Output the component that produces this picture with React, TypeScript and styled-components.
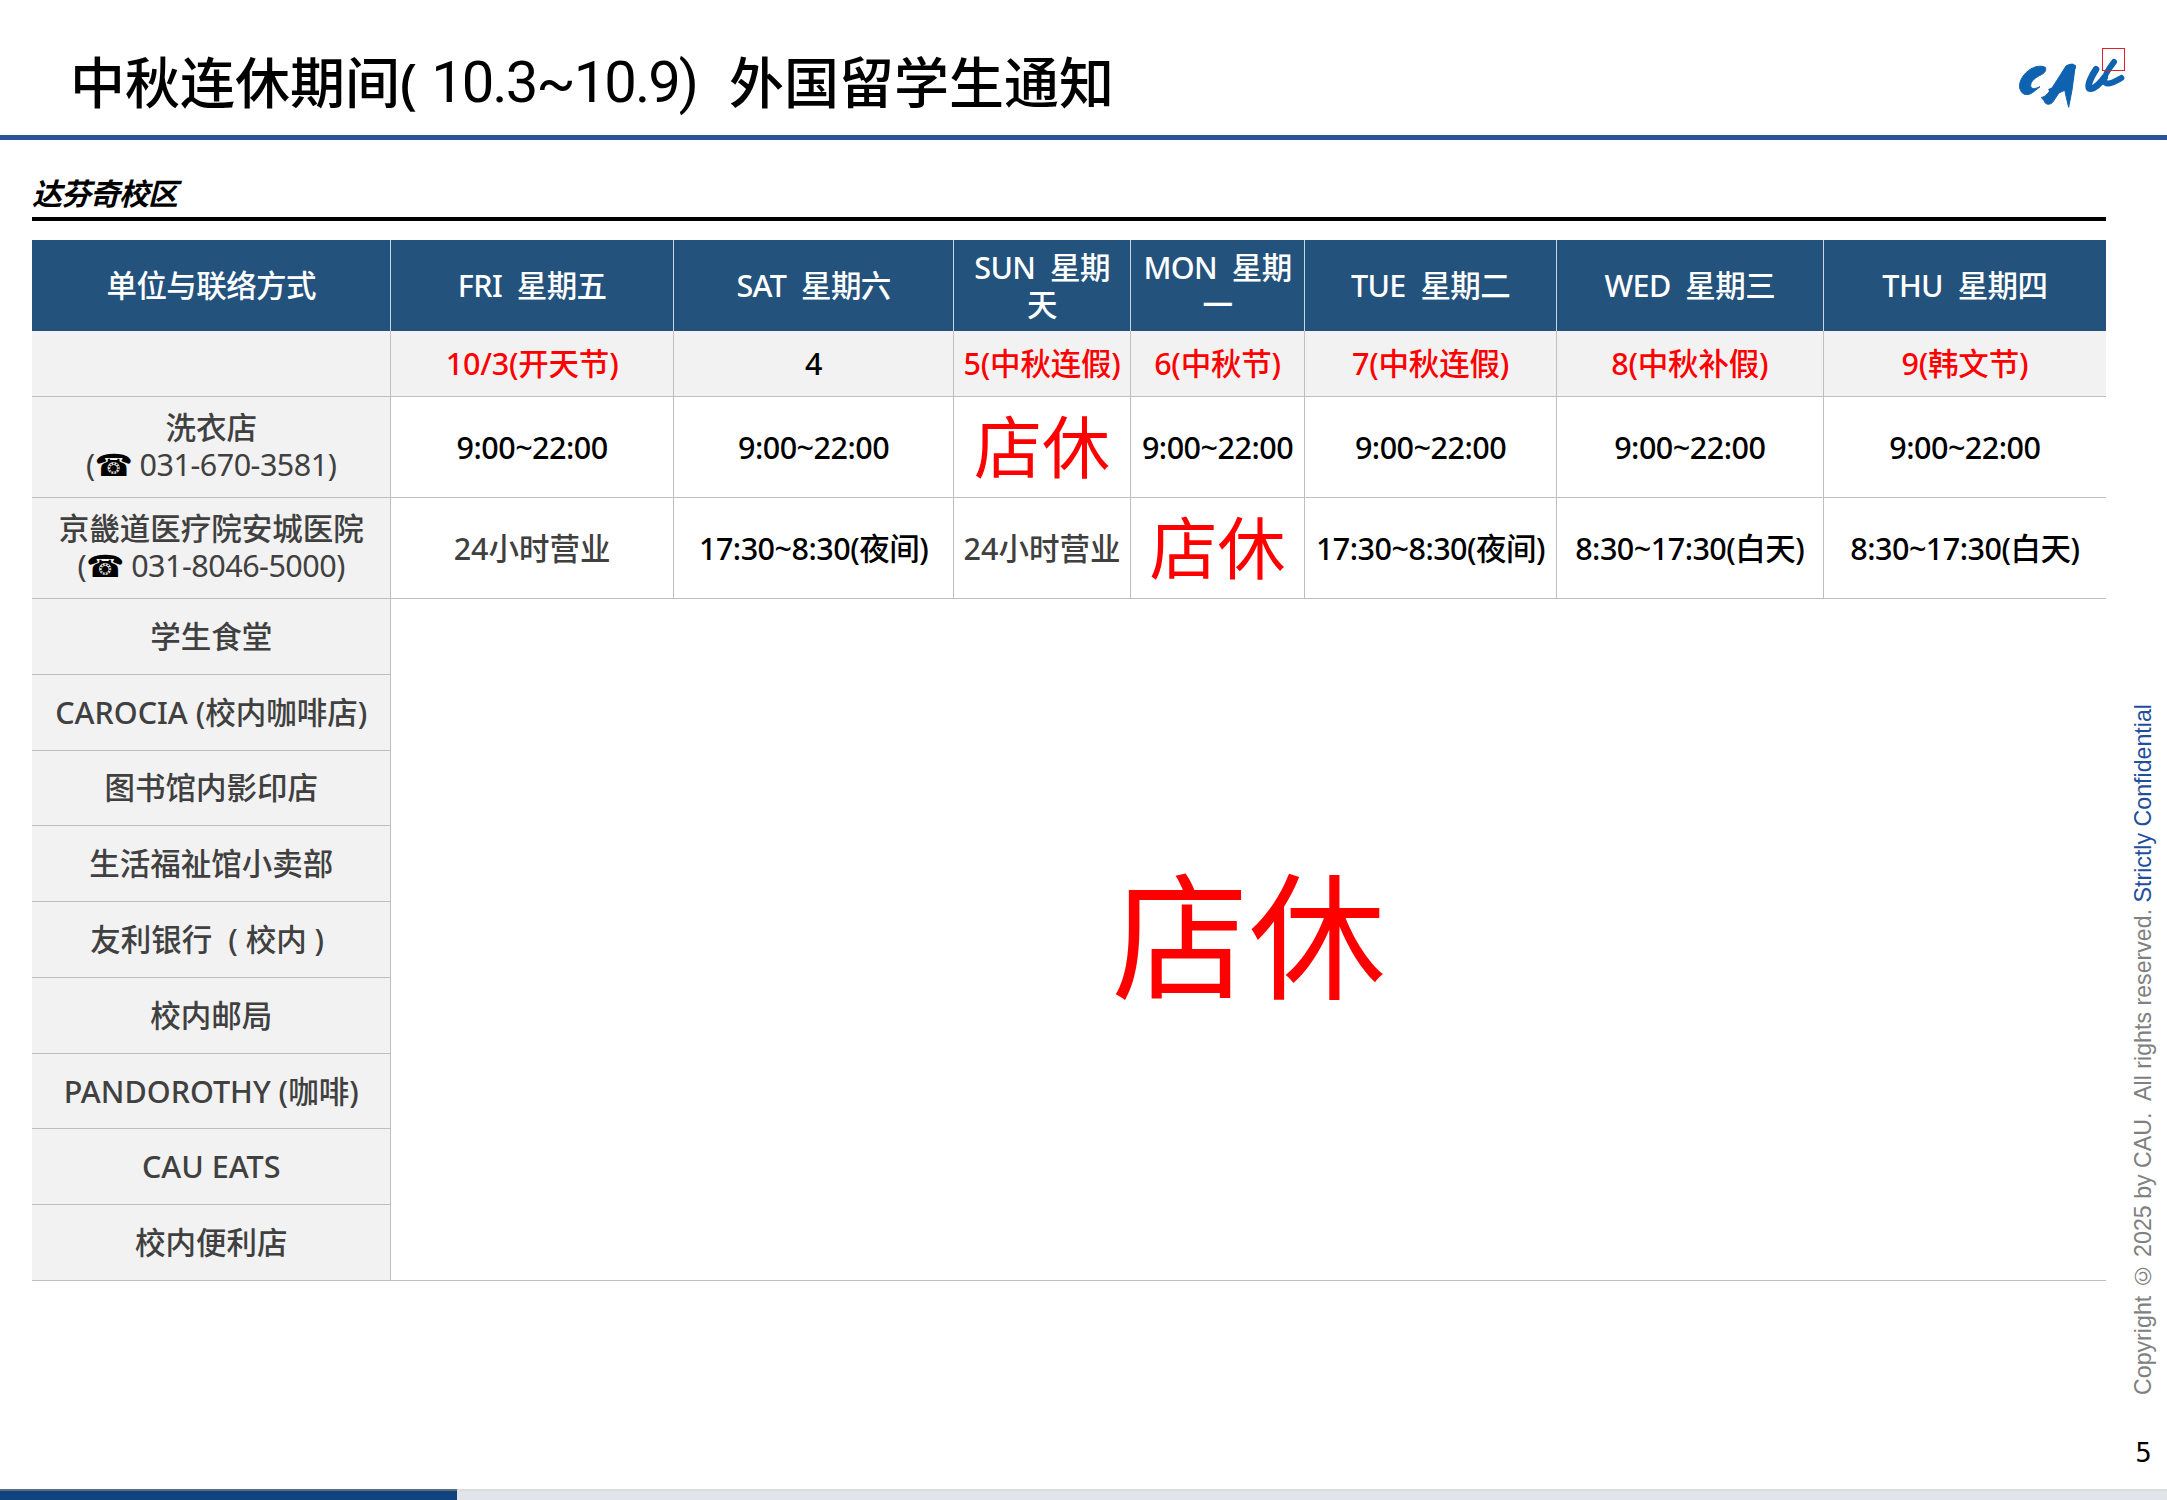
import React from 'react'
import styled, { createGlobalStyle } from 'styled-components'

const GlobalStyle = createGlobalStyle`
    html, body {
        margin: 0;
        padding: 0;
        background: #fff;
    }
`

const CJK = `"Noto Sans", "Noto Sans CJK SC", sans-serif`

const Page = styled('div')`
    width: 2167px;
    height: 1500px;
    display: flex;
    flex-direction: column;
    font-family: ${CJK};
    overflow: hidden;
`

const TitleBar = styled('header')`
    height: 135px;
    flex: none;
    display: flex;
    align-items: center;
    justify-content: space-between;
    padding: 0 27px 0 70px;
    border-bottom: 5px solid #2a5699;
    box-sizing: content-box;
`

const Title = styled('h1')`
    margin: 28px 0 0;
    display: flex;
    align-items: center;
    font-size: 55px;
    font-weight: 500;
    line-height: 1;
    color: #000;
    white-space: pre;
`

const TitleDates = styled('span')`
    margin: 0 32px 0 14px;
    font-family: Roboto, sans-serif;
    font-size: 58px;
    font-weight: 400;
    letter-spacing: -2px;
`

const Logo = styled('div')`
    position: relative;
    width: 130px;
    height: 75px;
    margin-top: 19px;
`

const LogoMark = styled('svg')`
    display: block;
    width: 100%;
    height: 100%;
`

const LogoBox = styled('span')`
    position: absolute;
    left: 92px;
    top: 8px;
    width: 21px;
    height: 21px;
    border: 1px solid #e0202f;
`

const Body = styled('div')`
    flex: 1;
    display: flex;
    min-height: 0;
`

const Main = styled('main')`
    width: 2106px;
    flex: none;
    padding-left: 32px;
    box-sizing: border-box;
`

const SectionTitle = styled('h2')`
    height: 81px;
    margin: 0 0 19px;
    box-sizing: border-box;
    display: flex;
    align-items: flex-end;
    padding-bottom: 5px;
    border-bottom: 4px solid #000;
    font-size: 30px;
    font-weight: 700;
    font-style: italic;
    letter-spacing: -1px;
    line-height: 1.2;
    color: #000;
`

const Table = styled('div')`
    display: grid;
    grid-template-columns: 359.4px 282.4px 280.6px 176.4px 174.5px 251.5px 267px 282.2px;
    grid-template-rows: 91px 66px 101px 101px repeat(9, 75.78px);
    font-size: 30.5px;
    line-height: 1.21;
    text-align: center;
`

const Cell = styled('div')<{ $last?: boolean }>`
    display: flex;
    flex-direction: column;
    align-items: center;
    justify-content: center;
    box-sizing: border-box;
    min-width: 0;
    border-bottom: 1.5px solid #bfbfbf;
    border-right: ${(p) => (p.$last ? 'none' : '1.5px solid #bfbfbf')};
`

const HeadCell = styled(Cell)`
    background: #23527c;
    color: #fff;
    font-weight: 500;
    letter-spacing: -0.6px;
    padding: 0 7px;
    border-bottom: none;
    border-right-color: ${(p) => (p.$last ? 'transparent' : '#c9d4df')};
`

const HeadText = styled('span')`
    white-space: pre-wrap;
`

const DayCell = styled(Cell)<{ $holiday: boolean }>`
    background: #f2f2f2;
    color: ${(p) => (p.$holiday ? '#f00' : '#000')};
    font-weight: 500;
    letter-spacing: -0.2px;
    white-space: nowrap;
`

const LabelCell = styled(Cell)<{ $shop?: boolean }>`
    grid-column: ${(p) => (p.$shop ? '1' : 'auto')};
    background: #f2f2f2;
    color: #404040;
    font-weight: 500;
    white-space: pre;
`

const Phone = styled('span')`
    font-weight: 400;
    letter-spacing: -0.5px;
`

const PhoneIcon = styled('span')`
    font-family: 'DejaVu Sans', sans-serif;
    color: #000;
`

const HoursCell = styled(Cell)<{ $muted?: boolean }>`
    color: ${(p) => (p.$muted ? '#404040' : '#000')};
    font-weight: 500;
    letter-spacing: ${(p) => (p.$muted ? '0' : '-0.5px')};
    white-space: nowrap;
`

const ClosedCell = styled(Cell)`
    color: #f00;
    font-size: 68px;
    line-height: 1;
`

const ClosedAll = styled(Cell)`
    grid-column: 2 / -1;
    grid-row: 5 / -1;
    padding-bottom: 5px;
    color: #f00;
    font-size: 137px;
    line-height: 1;
`

const Aside = styled('aside')`
    flex: 1;
    display: flex;
    flex-direction: column;
    align-items: center;
    justify-content: flex-end;
    gap: 45px;
    padding: 0 0 23px 14px;
    font-family: 'Liberation Sans', sans-serif;
`

const Notice = styled('div')`
    writing-mode: vertical-rl;
    transform: rotate(180deg);
    font-size: 23.2px;
    line-height: 1;
    color: #808080;
    white-space: pre;
`

const Confidential = styled('span')`
    color: #1f4e9c;
`

const PageNumber = styled('div')`
    font-family: 'DejaVu Sans', sans-serif;
    font-size: 26px;
    line-height: 1;
    color: #000;
`

const FooterBar = styled('footer')`
    height: 11px;
    flex: none;
    display: flex;
    background: #e1e5e9;
    border-top: 2px solid #dcdcdc;
    box-sizing: border-box;
`

const FooterProgress = styled('div')`
    width: 457px;
    margin-top: -2px;
    background: #0f4480;
    border-top: 2px solid #5f6b78;
`

type Day = { head: string; date: string; holiday: boolean }

const days: Day[] = [
    { head: 'FRI  星期五', date: '10/3(开天节)', holiday: true },
    { head: 'SAT  星期六', date: '4', holiday: false },
    { head: 'SUN  星期天', date: '5(中秋连假)', holiday: true },
    { head: 'MON  星期一', date: '6(中秋节)', holiday: true },
    { head: 'TUE  星期二', date: '7(中秋连假)', holiday: true },
    { head: 'WED  星期三', date: '8(中秋补假)', holiday: true },
    { head: 'THU  星期四', date: '9(韩文节)', holiday: true },
]

const laundry = ['9:00~22:00', '9:00~22:00', null, '9:00~22:00', '9:00~22:00', '9:00~22:00', '9:00~22:00']
const hospital = [
    '24小时营业',
    '17:30~8:30(夜间)',
    '24小时营业',
    null,
    '17:30~8:30(夜间)',
    '8:30~17:30(白天)',
    '8:30~17:30(白天)',
]

const closedShops = [
    '学生食堂',
    'CAROCIA (校内咖啡店)',
    '图书馆内影印店',
    '生活福祉馆小卖部',
    '友利银行  ( 校内 ) ',
    '校内邮局',
    'PANDOROTHY (咖啡)',
    'CAU EATS',
    '校内便利店',
]

const renderHours = (row: (string | null)[]) =>
    row.map((value, i) =>
        value === null ? (
            <ClosedCell key={i}>店休</ClosedCell>
        ) : (
            <HoursCell key={i} $last={i === 6} $muted={value.startsWith('24')}>
                {value}
            </HoursCell>
        )
    )

const App = () => {
    return (
        <Page>
            <GlobalStyle />
            <TitleBar>
                <Title>
                    中秋连休期间(
                    <TitleDates>10.3~10.9)</TitleDates>
                    外国留学生通知
                </Title>
                <Logo>
                    <LogoMark
                        viewBox="0 0 390 225"
                        fill="#0f62b0"
                        stroke="#0f62b0"
                        strokeWidth="3"
                        strokeLinejoin="round"
                    >
                        <path d="M106 82C90 74 66 80 48 98C30 116 24 138 32 152C40 168 58 166 70 156L90 140C74 148 62 148 62 136C62 124 76 112 94 104C104 99 110 92 106 82Z" />
                        <path d="M168 78C186 68 198 72 196 84L130 184C122 196 106 196 102 182L94 172C112 170 122 150 168 78Z" />
                        <path d="M196 76L186 150L176 202L166 160L160 118Z" />
                        <path d="M116 148L186 124L184 142L126 168Z" />
                        <path
                            d="M258 88C240 116 226 148 244 146C258 144 272 128 284 112"
                            fill="none"
                            strokeWidth="20"
                            strokeLinecap="round"
                        />
                        <path
                            d="M312 66C292 92 276 118 286 128C296 136 316 124 334 114"
                            fill="none"
                            strokeWidth="18"
                            strokeLinecap="round"
                        />
                    </LogoMark>
                    <LogoBox />
                </Logo>
            </TitleBar>
            <Body>
                <Main>
                    <SectionTitle>达芬奇校区</SectionTitle>
                    <Table>
                        <HeadCell>单位与联络方式</HeadCell>
                        {days.map((day, i) => (
                            <HeadCell key={day.head} $last={i === 6}>
                                <HeadText>{day.head}</HeadText>
                            </HeadCell>
                        ))}
                        <LabelCell />
                        {days.map((day, i) => (
                            <DayCell key={day.date} $holiday={day.holiday} $last={i === 6}>
                                {day.date}
                            </DayCell>
                        ))}
                        <LabelCell>
                            <span>洗衣店</span>
                            <Phone>
                                (<PhoneIcon>☎</PhoneIcon> 031-670-3581)
                            </Phone>
                        </LabelCell>
                        {renderHours(laundry)}
                        <LabelCell>
                            <span>京畿道医疗院安城医院</span>
                            <Phone>
                                (<PhoneIcon>☎</PhoneIcon> 031-8046-5000)
                            </Phone>
                        </LabelCell>
                        {renderHours(hospital)}
                        {closedShops.map((shop) => (
                            <LabelCell key={shop} $shop>
                                {shop}
                            </LabelCell>
                        ))}
                        <ClosedAll $last>店休</ClosedAll>
                    </Table>
                </Main>
                <Aside>
                    <Notice>
                        {'Copyright © 2025 by CAU.  All rights reserved. '}
                        <Confidential>Strictly Confidential</Confidential>
                    </Notice>
                    <PageNumber>5</PageNumber>
                </Aside>
            </Body>
            <FooterBar>
                <FooterProgress />
            </FooterBar>
        </Page>
    )
}

export default App
